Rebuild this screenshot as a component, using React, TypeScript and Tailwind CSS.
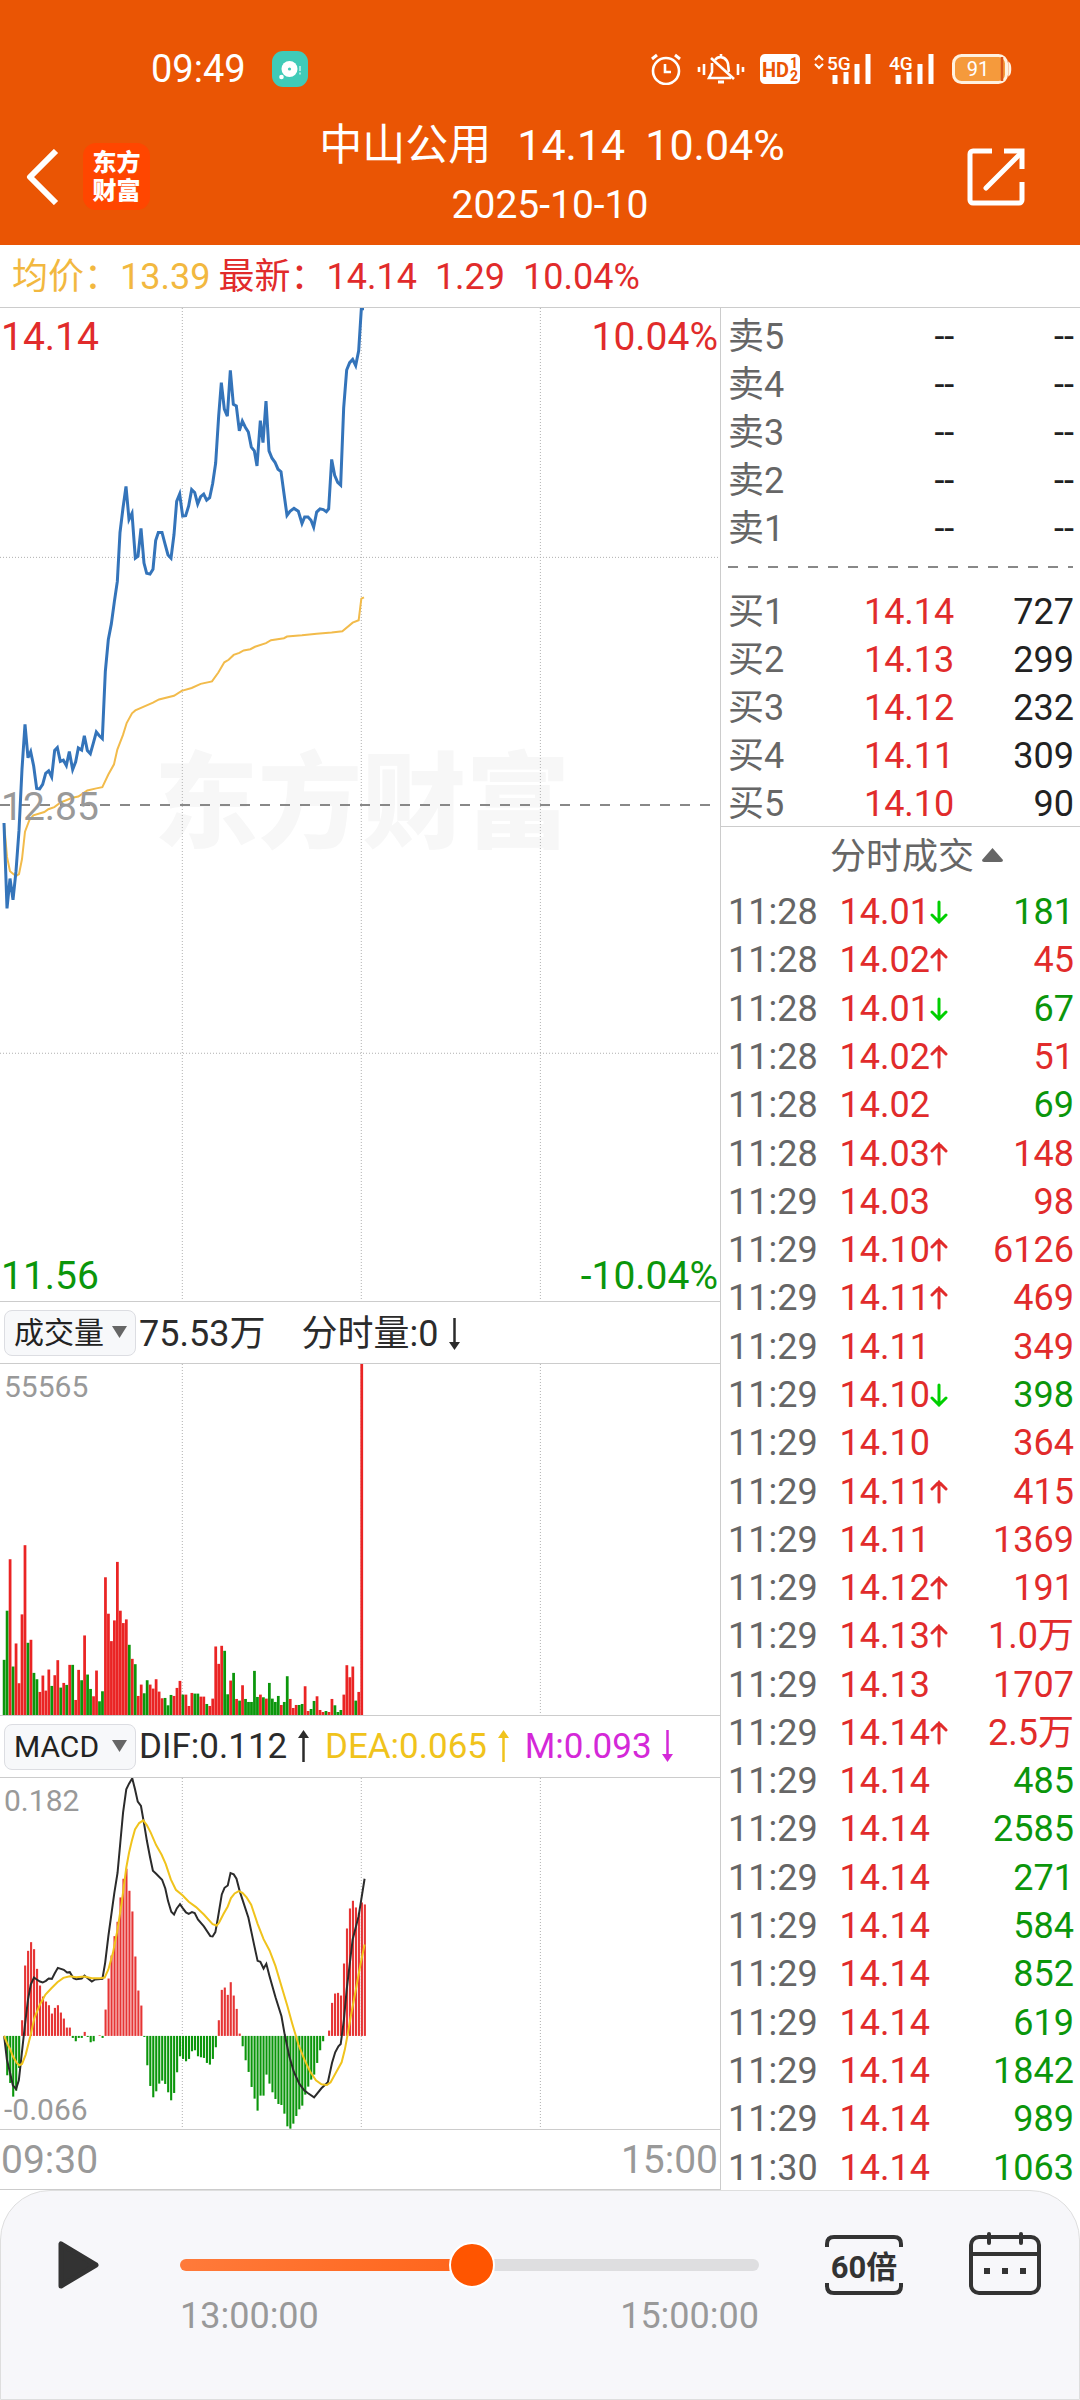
import clsx from "clsx";

const NS = "non-scaling-stroke";

const sells = [5, 4, 3, 2, 1];

const buys = [
  { level: 1, price: "14.14", volume: "727" },
  { level: 2, price: "14.13", volume: "299" },
  { level: 3, price: "14.12", volume: "232" },
  { level: 4, price: "14.11", volume: "309" },
  { level: 5, price: "14.10", volume: "90" },
];

// time, price, direction of the tick, volume, side (b = buy, s = sell)
const trades = [
  ["11:28", "14.01", "down", "181", "s"],
  ["11:28", "14.02", "up", "45", "b"],
  ["11:28", "14.01", "down", "67", "s"],
  ["11:28", "14.02", "up", "51", "b"],
  ["11:28", "14.02", "", "69", "s"],
  ["11:28", "14.03", "up", "148", "b"],
  ["11:29", "14.03", "", "98", "b"],
  ["11:29", "14.10", "up", "6126", "b"],
  ["11:29", "14.11", "up", "469", "b"],
  ["11:29", "14.11", "", "349", "b"],
  ["11:29", "14.10", "down", "398", "s"],
  ["11:29", "14.10", "", "364", "b"],
  ["11:29", "14.11", "up", "415", "b"],
  ["11:29", "14.11", "", "1369", "b"],
  ["11:29", "14.12", "up", "191", "b"],
  ["11:29", "14.13", "up", "1.0万", "b"],
  ["11:29", "14.13", "", "1707", "b"],
  ["11:29", "14.14", "up", "2.5万", "b"],
  ["11:29", "14.14", "", "485", "s"],
  ["11:29", "14.14", "", "2585", "s"],
  ["11:29", "14.14", "", "271", "s"],
  ["11:29", "14.14", "", "584", "s"],
  ["11:29", "14.14", "", "852", "s"],
  ["11:29", "14.14", "", "619", "s"],
  ["11:29", "14.14", "", "1842", "s"],
  ["11:29", "14.14", "", "989", "s"],
  ["11:30", "14.14", "", "1063", "s"],
];

const pricePoints =
  "12,1282 21,1491 30,1418 39,1470 48,1400 57,1300 66,1150 75,1040 84,1122 92,1107 101,1142 110,1197 119,1198 128,1187 137,1160 146,1154 155,1169 164,1104 172,1097 181,1131 190,1128 199,1141 208,1107 218,1151 227,1132 235,1098 245,1103 253,1068 262,1104 271,1112 280,1086 289,1059 298,1068 307,1075 316,910 325,832 334,794 343,740 352,690 360,570 369,510 378,457 387,538 396,523 406,633 414,628 423,560 432,645 440,670 450,672 459,660 467,590 475,570 486,570 495,598 504,625 513,633 522,575 530,494 539,476 548,530 557,529 566,505 575,465 584,472 593,500 602,482 611,476 620,491 629,485 638,450 647,400 656,285 664,203 673,268 682,285 691,173 700,256 709,260 718,321 727,297 736,312 745,324 754,361 763,370 771,407 781,296 789,350 798,248 807,370 816,388 825,398 834,415 843,421 852,475 861,528 870,518 882,511 895,518 906,548 914,532 924,532 933,540 941,557 950,520 960,512 970,514 979,519 986,512 995,391 1004,430 1013,447 1022,454 1031,265 1040,172 1049,154 1058,146 1067,161 1076,125 1084,22 1092,22";

const averagePoints =
  "12,1282 21,1365 30,1400 39,1406 48,1412 57,1407 66,1370 75,1303 88,1275 100,1263 133,1255 145,1248 163,1243 181,1232 217,1220 235,1217 262,1202 289,1197 307,1194 325,1163 342,1138 352,1102 369,1066 380,1037 396,1013 406,1006 459,987 477,979 522,970 545,958 575,951 602,941 636,935 655,913 673,888 686,882 701,870 718,865 731,859 751,856 765,850 798,841 813,834 852,829 861,825 906,822 950,818 995,815 1027,812 1058,791 1076,785 1084,732 1092,729";

// one entry per minute, negative for a falling minute
const volumes = [
  -165, -312, 466, -145, 214, 95, 301, 508, -216, 225, -126, -107, 69, 118, 73,
  136, -87, 119, 164, -82, 96, -90, 150, -150, 45, 135, -104, 238, -121, -78,
  56, 133, -41, -71, 412, 303, 221, 283, 458, 312, 275, 286, -210, 168, -152,
  57, 91, -65, -104, 91, 79, 107, 70, 50, -51, -29, -60, 57, 81, 102, -61, 61,
  27, 66, -64, -64, 55, 55, -33, 27, 49, 205, 153, 207, -192, -62, 103, -126,
  48, -43, 89, -48, -39, -39, -132, -54, 61, -53, 49, -96, -49, -39, -57, 30,
  -39, -116, 48, 21, 30, -30, -33, 86, 12, -18, -42, 56, 15, 9, -12, 9, 48,
  -29, -9, -15, 61, 149, 113, 145, -43, 69, 1050,
];

const macd = [
  0, -118, -141, -182, -164, -96, 47, 211, 255, 281, 260, 201, 151, 118, 103,
  92, 67, 84, 92, 70, 52, 25, 25, -6, -16, -6, -6, 12, -3, -19, -16, 0, 2, -6,
  79, 172, 241, 299, 342, 415, 471, 501, 435, 373, 238, 136, 91, -3, -88, -150,
  -184, -166, -143, -134, -144, -169, -193, -171, -109, -61, -69, -76, -69, -46,
  -43, -61, -64, -66, -81, -86, -69, -34, 47, 138, 145, 123, 161, 121, 81, 7,
  -31, -73, -108, -153, -188, -224, -179, -179, -116, -143, -169, -189, -204,
  -207, -233, -271, -278, -263, -240, -220, -209, -176, -152, -131, -116, -81,
  -43, -16, 0, 16, 99, 127, 129, 121, 217, 322, 382, 405, 385, 369, 400, 394,
];

const difPoints =
  "9,979 15,1050 22,1090 28,1127 35,1138 41,1112 46,1050 54,950 61,870 67,825 74,804 80,810 87,816 93,819 100,814 106,807 113,808 119,792 126,775 139,781 146,789 152,788 160,806 166,809 178,807 184,798 191,806 200,816 207,810 223,808 229,760 236,680 249,550 256,490 262,400 268,310 275,240 281,223 288,207 294,240 300,277 307,290 314,345 320,395 327,445 333,484 340,493 353,511 360,537 366,575 373,607 379,615 385,597 392,584 398,596 405,609 411,613 418,608 424,611 431,630 444,651 458,680 463,681 469,668 474,630 483,555 489,535 496,528 502,491 509,495 515,508 522,545 541,625 554,710 561,754 567,757 574,777 580,763 587,800 600,863 613,920 620,975 630,1040 640,1087 652,1123 663,1143 671,1151 684,1163 700,1136 714,1118 723,1060 730,1028 737,1010 742,1003 749,930 755,840 768,690 781,620 794,508";

const deaPoints =
  "9,979 15,1000 22,1018 28,1040 36,1059 42,1067 48,1063 56,1035 66,980 75,925 87,885 99,855 112,836 125,818 138,805 152,800 166,803 184,801 200,806 218,806 228,804 236,780 246,730 256,660 265,580 275,475 281,430 287,395 294,360 303,341 312,333 320,348 328,369 340,407 352,436 361,464 372,510 383,541 398,558 411,577 427,593 444,615 463,644 472,648 477,640 487,613 496,591 503,566 511,552 520,545 528,550 537,564 547,586 561,643 574,689 587,723 600,770 613,830 626,890 636,940 650,1005 663,1050 675,1085 688,1112 700,1124 712,1126 720,1118 732,1088 744,1058 751,1020 757,975 764,920 775,840 785,765 794,705";

const caption = "absolute leading-none text-[#999]";

function GridLines({ width, top, height }: { width: number; top: number; height: number }) {
  return (
    <g stroke="#b0b0b0" strokeDasharray="1 2">
      {[0.2532, 0.5018, 0.7505].map((r) => (
        <line
          key={r}
          x1={width * r}
          x2={width * r}
          y1={top}
          y2={top + height}
          vectorEffect={NS}
        />
      ))}
    </g>
  );
}

function StatusBar() {
  return (
    <div className="flex h-[114px] items-center pt-6 pl-[151px] pr-[68px]">
      <span className="text-[38px] leading-none">09:49</span>
      <svg className="ml-[26px] size-9" viewBox="0 0 36 36">
        <rect width="36" height="36" rx="11" fill="#40cbb8" />
        <circle cx="17.500" cy="18" r="8" fill="#fff" />
        <circle cx="17.500" cy="18" r="1.600" fill="#40cbb8" />
        <circle cx="9.500" cy="26" r="2.300" fill="#fff" />
        <path d="M28 15v5M28 21.500v2" stroke="#c8f1ea" strokeWidth="1.500" />
      </svg>
      <div className="ml-auto flex items-center">
        <svg className="h-8 w-[32px]" viewBox="0 0 32 32" fill="none" stroke="#fff" strokeWidth="2.600">
          <circle cx="16" cy="18" r="13" />
          <path d="M15 11v8h6" />
          <path d="M2 6l5-4M30 6l-5-4" strokeWidth="3" />
        </svg>
        <svg className="ml-[15px] h-8 w-[48px]" viewBox="0 0 48 32" fill="none" stroke="#fff" strokeWidth="2.600">
          <path d="M15 10v9l-3 6h22M18 7c3-4 9-4 12 1 2 3 1 8 2 11M24 1v3" />
          <path d="M14 5l23 21" />
          <path d="M21 29h6" strokeWidth="3" />
          <path d="M7 11v11M41 11v11M2 14v5M46 14v5" />
        </svg>
        <svg className="ml-[15px] h-8 w-[40px]" viewBox="0 0 40 32" fill="#ea5504" fontFamily="Roboto" fontWeight="700">
          <rect y="1" width="40" height="30" rx="5" fill="#fff" />
          <text x="2" y="24" fontSize="20">
            HD
          </text>
          <text x="30" y="15" fontSize="14">
            1
          </text>
          <text x="30" y="28" fontSize="14">
            2
          </text>
        </svg>
        <svg className="ml-[14px] h-8 w-[58px]" viewBox="0 0 58 32">
          <path d="M1 7l4-4 4 4M1 11l4 4 4-4" fill="none" stroke="#fff" strokeWidth="2" />
          <text x="13" y="17" fontSize="19" fontWeight="500" fill="#fff" fontFamily="Roboto">
            5G
          </text>
          <path d="M21 22v9M32 19v12M43 11v20M54 1v30" stroke="#fff" strokeWidth="5" />
        </svg>
        <svg className="ml-[17px] h-8 w-[46px]" viewBox="0 0 46 32">
          <text x="0" y="17" fontSize="19" fontWeight="500" fill="#fff" fontFamily="Roboto">
            4G
          </text>
          <path d="M9 22v9M20 19v12M31 11v20M42 1v30" stroke="#fff" strokeWidth="5" />
        </svg>
        <svg className="ml-[17px] h-8 w-[60px]" viewBox="0 0 60 32">
          <rect x="1.500" y="2.500" width="53" height="27" rx="8" fill="#f59a3c" stroke="#fff1e0" strokeWidth="3" />
          <path d="M50 4v24" stroke="#d9541a" strokeWidth="2.500" />
          <path d="M57 10c2 2 2 10 0 12z" fill="#fff1e0" stroke="#fff1e0" strokeWidth="1.500" />
          <text x="26" y="23" fontSize="20" textAnchor="middle" fill="#fff" fontFamily="Roboto">
            91
          </text>
        </svg>
      </div>
    </div>
  );
}

function Header() {
  return (
    <header className="bg-[#ea5504] pb-[10px] text-white">
      <StatusBar />
      <div className="grid grid-cols-[164px_1fr_140px] items-center">
        <div className="flex items-center pt-1 pl-6">
          <button aria-label="返回">
            <svg className="h-[56px] w-[36px]" viewBox="0 0 36 56" fill="none" stroke="#fff" strokeWidth="6">
              <path d="M32 2L6 28l26 26" strokeLinejoin="round" />
            </svg>
          </button>
          <div className="ml-[23px] flex size-[67px] flex-col items-center justify-center rounded-[13px] bg-[#ff4600] text-[24px] leading-[28px] font-black">
            <span>东方</span>
            <span>财富</span>
          </div>
        </div>
        <div className="pt-px text-center">
          <h1 className="flex justify-center text-[43px] leading-[60px]">
            <span>中山公用</span>
            <span className="ml-[26px]">14.14</span>
            <span className="ml-[20px]">10.04%</span>
          </h1>
          <p className="pr-1 text-[39px] leading-[60px]">2025-10-10</p>
        </div>
        <div className="flex justify-end pt-1 pr-[55px]">
          <button aria-label="分享">
            <svg className="size-[58px]" viewBox="0 0 58 58" fill="none" stroke="#fff" strokeWidth="5">
              <path d="M25 3H6a3 3 0 0 0-3 3v46a3 3 0 0 0 3 3h46a3 3 0 0 0 3-3V34" />
              <path d="M37 3h18v18" />
              <path d="M54 5L19 40" strokeLinecap="round" />
            </svg>
          </button>
        </div>
      </div>
    </header>
  );
}

function Summary() {
  return (
    <div className="flex h-[62px] items-center pt-0.5 pl-3 text-[36px] leading-none text-[#e12b2b]">
      <span className="text-[#f2b840]">均价：13.39</span>
      <span className="ml-2">最新：14.14</span>
      <span className="ml-[18px]">1.29</span>
      <span className="ml-[18px]">10.04%</span>
    </div>
  );
}

function PriceChart() {
  return (
    <div className="relative h-[993px] text-[39px]">
      <div className="absolute inset-0 flex items-center justify-center pl-1 text-[104px] leading-none font-black text-[#f7f7f7]">
        东方财富
      </div>
      <svg
        className="absolute inset-0 h-full w-full"
        viewBox="0 20 2160 2433"
        preserveAspectRatio="none"
        fill="none"
      >
        <GridLines width={2160} top={20} height={2433} />
        <g stroke="#b0b0b0" strokeDasharray="1 2">
          <line x1="0" x2="2160" y1="631" y2="631" vectorEffect={NS} />
          <line x1="0" x2="2160" y1="1846" y2="1846" vectorEffect={NS} />
        </g>
        <line x1="0" x2="2160" y1="1238" y2="1238" stroke="#888" strokeWidth="2" strokeDasharray="10 10" vectorEffect={NS} />
        <polyline points={averagePoints} stroke="#f2bb4b" strokeWidth="2" vectorEffect={NS} />
        <polyline points={pricePoints} stroke="#3474ba" strokeWidth="3" vectorEffect={NS} />
      </svg>
      <span className="absolute top-[10px] left-px leading-none text-[#e12b2b]">14.14</span>
      <span className="absolute top-[10px] right-0.5 leading-none text-[#e12b2b]">10.04%</span>
      <span className={clsx(caption, "top-[480px] left-px")}>12.85</span>
      <span className="absolute bottom-[5px] left-px leading-none text-[#0b960b]">11.56</span>
      <span className="absolute right-0.5 bottom-[5px] leading-none text-[#0b960b]">-10.04%</span>
    </div>
  );
}

function IndicatorSelect({ label, options }: { label: string; options: string[] }) {
  return (
    <div className="relative ml-1 h-[46px] w-[132px]">
      <select
        aria-label={label}
        className="h-full w-full appearance-none rounded-lg border border-[#dcdde2] bg-[#f7f8fa] pl-[9px] text-[30px] text-[#222]"
      >
        {options.map((o) => (
          <option key={o}>{o}</option>
        ))}
      </select>
      <svg className="pointer-events-none absolute top-[16px] right-[9px] h-3 w-[15px]" viewBox="0 0 15 12">
        <path d="M0 0h15L7.500 12z" fill="#666" />
      </svg>
    </div>
  );
}

function LongArrow({ down }: { down?: boolean }) {
  return (
    <svg
      className={clsx("ml-0.5 inline-block h-[32px] w-[11px] align-[-4px]", down && "rotate-180")}
      viewBox="0 0 11 32"
    >
      <path d="M5.500 4v28" stroke="currentColor" strokeWidth="2.500" />
      <path d="M5.500 0L11 8H0z" fill="currentColor" />
    </svg>
  );
}

function VolumeChart() {
  return (
    <div className="relative h-[351px]">
      <svg className="absolute inset-0 h-full w-full" viewBox="0 225 1568 1050" preserveAspectRatio="none">
        <GridLines width={1568} top={225} height={1050} />
        {volumes.map((v, i) => (
          <rect
            key={i}
            x={6 + i * 6.49}
            y={1275 - Math.abs(v)}
            width="6"
            height={Math.abs(v)}
            fill={v > 0 ? "#ea2424" : "#0b960b"}
          />
        ))}
      </svg>
      <span className={clsx(caption, "top-[8px] left-[4px] text-[30px]")}>55565</span>
    </div>
  );
}

function MacdChart() {
  return (
    <div className="relative h-[351px]">
      <svg className="absolute inset-0 h-full w-full" viewBox="0 206 1568 1052" preserveAspectRatio="none" fill="none">
        <GridLines width={1568} top={206} height={1052} />
        {macd.map((v, i) => (
          <rect
            key={i}
            x={7 + i * 6.49}
            y={v > 0 ? 979 - v : 979}
            width="4.600"
            height={Math.abs(v)}
            fill={v > 0 ? "#e63535" : "#0b960b"}
          />
        ))}
        <polyline points={difPoints} stroke="#2b2b2b" strokeWidth="2" vectorEffect={NS} />
        <polyline points={deaPoints} stroke="#f0c31c" strokeWidth="2" vectorEffect={NS} />
      </svg>
      <span className={clsx(caption, "top-[8px] left-[4px] text-[30px]")}>0.182</span>
      <span className={clsx(caption, "bottom-[4px] left-[4px] text-[30px]")}>-0.066</span>
    </div>
  );
}

function Charts() {
  const bar = "flex h-[63px] items-center border-y border-[#ccc] leading-none whitespace-nowrap text-[#2b2b2b]";

  return (
    <section className="w-2/3 min-w-0">
      <PriceChart />
      <div className={clsx(bar, "text-[36px]")}>
        <IndicatorSelect label="成交量指标" options={["成交量", "成交额"]} />
        <span className="ml-[3px] pt-0.5">75.53万</span>
        <span className="ml-[36px] pt-0.5">
          分时量:0 <LongArrow down />
        </span>
      </div>
      <VolumeChart />
      <div className={clsx(bar, "text-[35px]")}>
        <IndicatorSelect label="技术指标" options={["MACD", "KDJ", "RSI"]} />
        <span className="ml-[3px]">
          DIF:0.112 <LongArrow />
        </span>
        <span className="ml-4 text-[#f0c31c]">
          DEA:0.065 <LongArrow />
        </span>
        <span className="ml-4 text-[#d428d8]">
          M:0.093 <LongArrow down />
        </span>
      </div>
      <MacdChart />
      <div className="flex h-[61px] items-center justify-between border-y border-[#ccc] pt-0.5 pr-0.5 pl-px text-[39px] leading-none text-[#999]">
        <span>09:30</span>
        <span>15:00</span>
      </div>
    </section>
  );
}

function TickArrow({ dir }: { dir: string }) {
  return (
    <svg
      className={clsx("h-[24px] w-[18px]", dir === "down" ? "rotate-180 text-[#00cf00]" : "text-[#e12b2b]")}
      viewBox="0 0 18 24"
      fill="none"
      stroke="currentColor"
      strokeWidth="3"
      strokeLinecap="round"
    >
      <path d="M9 22V2M2 9l7-7 7 7" />
    </svg>
  );
}

function OrderRow({ label, price, volume }: { label: string; price: string; volume: string }) {
  return (
    <tr className="h-12">
      <th className="w-[30%] pt-1 pl-[7px] text-left font-normal text-[#666]">{label}</th>
      <td className={clsx("w-[35%] pt-1 text-right", price === "--" ? "text-[#222]" : "text-[#e12b2b]")}>{price}</td>
      <td className="pt-1 pr-1.5 text-right text-[#222]">{volume}</td>
    </tr>
  );
}

function Quotes() {
  return (
    <section className="w-1/3 min-w-0 border-l border-[#ccc] text-[36px] leading-none">
      <table className="mt-[3px] w-full table-fixed">
        <tbody>
          {sells.map((n) => (
            <OrderRow key={n} label={`卖${n}`} price="--" volume="--" />
          ))}
        </tbody>
      </table>
      <div className="px-[7px]">
        <svg className="block h-[35px] w-full">
          <line x1="0" x2="100%" y1="16" y2="16" stroke="#888" strokeWidth="2" strokeDasharray="10 10" />
        </svg>
      </div>
      <table className="w-full table-fixed">
        <tbody>
          {buys.map((b) => (
            <OrderRow key={b.level} label={`买${b.level}`} price={b.price} volume={b.volume} />
          ))}
        </tbody>
      </table>
      <button className="flex h-[60px] w-full items-center justify-center gap-2 border-t border-[#ccc] pl-8 text-[#666]">
        分时成交
        <svg className="mb-1 h-[14px] w-[21px]" viewBox="0 0 21 14">
          <path d="M10.500 0L21 12q0 2-2 2H2q-2 0-2-2z" fill="#666" />
        </svg>
      </button>
      <table className="h-[1304px] w-full table-fixed">
        <tbody>
          {trades.map(([time, price, dir, volume, side], i) => (
            <tr key={i}>
              <td className="w-[33%] pt-1 pl-[7px] text-[#666]">{time}</td>
              <td className="w-[36%] pt-1 text-[#e12b2b]">
                <div className="flex items-center">
                  {price}
                  {dir && <TickArrow dir={dir} />}
                </div>
              </td>
              <td className={clsx("pt-1 pr-1.5 text-right", side === "s" ? "text-[#0b960b]" : "text-[#e12b2b]")}>
                {volume}
              </td>
            </tr>
          ))}
        </tbody>
      </table>
    </section>
  );
}

function Playback() {
  return (
    <footer className="h-[210px] rounded-t-[50px] border border-[#dedede] bg-[#f7f7fa] pt-[53px] pr-[38px] pl-[57px]">
      <div className="flex items-start">
        <button aria-label="播放" className="flex h-[42px] items-center">
          <svg className="h-[48px] w-[41px]" viewBox="0 0 41 48">
            <path d="M3 3v42l35-21z" fill="#333" stroke="#333" strokeWidth="5" strokeLinejoin="round" />
          </svg>
        </button>
        <div className="ml-[81px] flex-1">
          <input
            type="range"
            aria-label="回放进度"
            min={0}
            max={1000}
            defaultValue={505}
            className="block h-[42px] w-full appearance-none bg-transparent [&::-webkit-slider-runnable-track]:h-3 [&::-webkit-slider-runnable-track]:rounded-full [&::-webkit-slider-runnable-track]:bg-[linear-gradient(to_right,#ff7a3a,#ff651b_50%,#dedee0_50%)] [&::-webkit-slider-thumb]:mt-[-17px] [&::-webkit-slider-thumb]:size-[46px] [&::-webkit-slider-thumb]:appearance-none [&::-webkit-slider-thumb]:rounded-full [&::-webkit-slider-thumb]:border-2 [&::-webkit-slider-thumb]:border-white [&::-webkit-slider-thumb]:bg-[#ff5500]"
          />
          <div className="mt-[10px] flex justify-between text-[36px] leading-10 text-[#999]">
            <span>13:00:00</span>
            <span>15:00:00</span>
          </div>
        </div>
        <button className="relative mt-[-9px] ml-[66px] h-[60px] w-[78px] pt-1 text-[31px] leading-none font-bold text-[#333]">
          <svg className="absolute inset-0 h-full w-full" viewBox="0 0 78 60" fill="none" stroke="#333" strokeWidth="4">
            <path d="M2 12V9q0-7 7-7h60q7 0 7 7v3M2 48v3q0 7 7 7h60q7 0 7-7v-3" />
          </svg>
          60倍
        </button>
        <button aria-label="选择日期" className="mt-[-12px] ml-[66px]">
          <svg className="h-[63px] w-[72px]" viewBox="0 0 72 63" fill="none" stroke="#333" strokeWidth="4">
            <rect x="2" y="5" width="68" height="56" rx="8" />
            <path d="M2 22h68" />
            <path d="M20 2v9M52 2v9" strokeLinecap="round" />
            <path d="M15 39h6M33 39h6M51 39h6" strokeWidth="6" />
          </svg>
        </button>
      </div>
    </footer>
  );
}

export default function App() {
  return (
    <div className="w-full bg-white font-[Roboto,'Noto_Sans_CJK_SC',sans-serif]">
      <Header />
      <Summary />
      <main className="flex border-t border-[#ccc]">
        <Charts />
        <Quotes />
      </main>
      <Playback />
    </div>
  );
}
